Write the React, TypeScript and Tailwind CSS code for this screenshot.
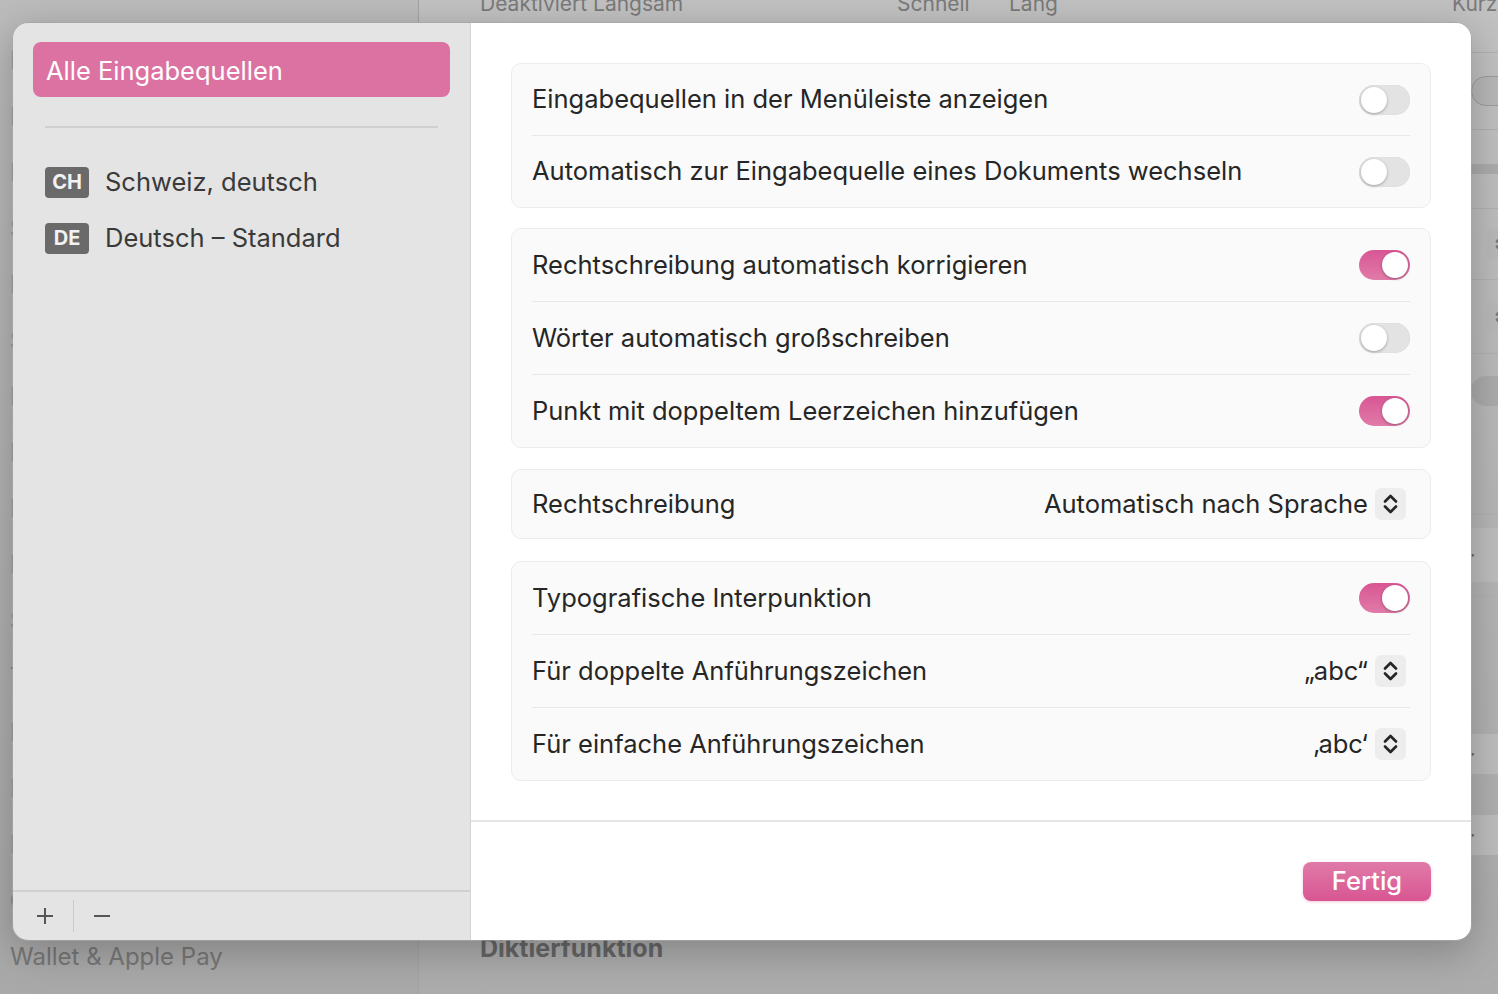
import React from "react";

const leftItems = [
  "Darstellung",
  "Bedienungshilfen",
  "Kontrollzentrum",
  "Siri & Spotlight",
  "Datenschutz",
  "Schreibtisch & Dock",
  "Displays",
  "Hintergrundbild",
  "Bildschirmschoner",
  "Batterie",
  "Sperrbildschirm",
  "Touch ID & Passwort",
  "Benutzer:innen",
  "Passwörter",
  "Internetaccounts",
  "Game Center",
];

function ChevronGlyph({ color }: { color: string }) {
  return (
    <svg width="15" height="24" viewBox="0 0 15 24" fill="none">
      <path d="M2 9.5 L7.5 4 L13 9.5" stroke={color} strokeWidth="2.7" strokeLinecap="round" strokeLinejoin="round" />
      <path d="M2 14.5 L7.5 20 L13 14.5" stroke={color} strokeWidth="2.7" strokeLinecap="round" strokeLinejoin="round" />
    </svg>
  );
}

function Chevrons() {
  return (
    <div className="flex h-[32px] w-[31px] items-center justify-center rounded-[6px] bg-[#ededed]">
      <ChevronGlyph color="#262626" />
    </div>
  );
}

function Toggle({ on }: { on?: boolean }) {
  return (
    <div
      className={
        on
          ? "flex h-[30px] w-[51px] items-center justify-end rounded-full bg-gradient-to-b from-[#d85594] to-[#e07ba8] px-[2px]"
          : "flex h-[30px] w-[51px] items-center justify-start rounded-full bg-[#e3e3e3] px-[2px] shadow-[inset_0_0_1px_rgba(0,0,0,0.15)]"
      }
    >
      <div className="h-[26px] w-[26px] rounded-full bg-white shadow-[0_1px_3px_rgba(0,0,0,0.3)]" />
    </div>
  );
}

function Row({ label, h = "h-[72px]", children }: { label: string; h?: string; children: React.ReactNode }) {
  return (
    <div className={`flex items-center justify-between px-[20px] ${h}`}>
      <span className="text-[25.5px] text-[#262626]">{label}</span>
      {children}
    </div>
  );
}

function PopupRow({ label, value, h }: { label: string; value: string; h: string }) {
  return (
    <div className={`flex items-center justify-between pl-[20px] pr-[24px] ${h}`}>
      <span className="text-[25.5px] text-[#262626]">{label}</span>
      <div className="flex items-center gap-[7px]">
        <span className="text-[25.5px] text-[#262626]">{value}</span>
        <Chevrons />
      </div>
    </div>
  );
}

function Divider() {
  return <div className="mx-[20px] h-px bg-[#e8e8e8]" />;
}

function Group({ className = "", children }: { className?: string; children: React.ReactNode }) {
  return <div className={`rounded-[10px] border border-[#ececec] bg-[#fafafa] ${className}`}>{children}</div>;
}

function BgRow({ h, children }: { h: string; children?: React.ReactNode }) {
  return <div className={`flex items-center justify-end border-b border-[#b1b1b1] ${h}`}>{children}</div>;
}

function BgButton({ h }: { h: string }) {
  return (
    <div className={`flex w-[70px] items-center rounded-[12px] bg-[#bebebe] pl-[12px] text-[20px] leading-none text-[#666] ${h}`}>
      ··
    </div>
  );
}

export default function App() {
  return (
    <div className="relative h-[994px] w-[1498px] overflow-hidden font-['Inter',sans-serif]">
      {/* dimmed settings window behind */}
      <div className="flex h-full w-full">
        <div className="flex w-[419px] flex-col justify-end border-r border-[#a3a3a3] bg-gradient-to-b from-[#bcbcbc] to-[#a9a9a9] pb-[9px] pl-[10px]">
          {leftItems.map((t) => (
            <div key={t} className="flex h-[56px] shrink-0 items-center whitespace-nowrap text-[24px] text-[#777]">
              {t}
            </div>
          ))}
          <div className="flex h-[56px] shrink-0 items-center whitespace-nowrap text-[24px] text-[#777]">Wallet &amp; Apple Pay</div>
        </div>
        <div className="flex flex-1 flex-col bg-gradient-to-b from-[#c2c2c2] to-[#acacac]">
          <div className="flex h-[53px] shrink-0 items-start whitespace-nowrap border-b border-[#b1b1b1] pl-[61px] text-[21px] text-[#7a7a7a]">
            <span className="-mt-[12px] w-[417px]">Deaktiviert Langsam</span>
            <span className="-mt-[12px] w-[112px]">Schnell</span>
            <span className="-mt-[12px] w-[443px]">Lang</span>
            <span className="-mt-[12px]">Kurz</span>
          </div>
          <div className="mr-[-24px] flex flex-col">
            <BgRow h="h-[77px]">
              <div className="h-[30px] w-[51px] rounded-full border border-[#9c9c9c] bg-[#b8b8b8]" />
            </BgRow>
            <BgRow h="h-[79px]">
              <div className="h-[10px] w-[60px] rounded-full bg-[#acacac]" />
            </BgRow>
            <BgRow h="h-[71px]">
              <div className="mr-[4px] flex h-[32px] w-[31px] items-center justify-center rounded-[6px] bg-[#b9b9b9]">
                <ChevronGlyph color="#7a7a7a" />
              </div>
            </BgRow>
            <BgRow h="h-[74px]">
              <div className="mr-[4px] flex h-[32px] w-[31px] items-center justify-center rounded-[6px] bg-[#b9b9b9]">
                <ChevronGlyph color="#7a7a7a" />
              </div>
            </BgRow>
            <BgRow h="h-[161px]">
              <div className="mb-[86px] h-[30px] w-[51px] rounded-full bg-[#acacac]" />
            </BgRow>
            <BgRow h="h-[81px]">
              <BgButton h="h-[54px]" />
            </BgRow>
            <BgRow h="h-[115px]" />
            <BgRow h="h-[87px]">
              <BgButton h="h-[40px]" />
            </BgRow>
            <BgRow h="h-[74px]">
              <BgButton h="h-[40px]" />
            </BgRow>
          </div>
          <div className="flex flex-1 flex-col pl-[61px]">
            <div className="mt-[58px] whitespace-nowrap text-[25px] font-bold text-[#666]">Diktierfunktion</div>
            <div className="mt-[14px] h-[40px] rounded-t-[12px] border border-[#b0b0b0]" />
          </div>
        </div>
      </div>

      {/* input sources sheet */}
      <div className="absolute left-[12px] top-[22px] flex h-[919px] w-[1460px] overflow-hidden rounded-[16px] border border-[#9a9a9a]/60 shadow-[0_10px_40px_rgba(0,0,0,0.25)]">
        <div className="flex w-[458px] flex-col border-r border-[#d4d4d4] bg-[#e4e4e4]">
          <div className="px-[20px] pt-[19px]">
            <div className="flex h-[55px] items-center rounded-[8px] bg-[#dc72a2] pl-[13px] pt-[3px] text-[25.5px] text-white">
              Alle Eingabequellen
            </div>
          </div>
          <div className="mx-[32px] mt-[29px] h-[2px] bg-[#d0d0d0]" />
          <div className="mt-[26px] flex flex-col px-[32px]">
            <div className="flex h-[56px] items-center gap-[16px]">
              <div className="flex h-[31px] w-[44px] items-center justify-center rounded-[4px] bg-[#6a6a6a] text-[20px] font-bold text-[#f2f2f2]">
                CH
              </div>
              <span className="text-[25.5px] text-[#3a3a3a]">Schweiz, deutsch</span>
            </div>
            <div className="flex h-[56px] items-center gap-[16px]">
              <div className="flex h-[31px] w-[44px] items-center justify-center rounded-[4px] bg-[#6a6a6a] text-[20px] font-bold text-[#f2f2f2]">
                DE
              </div>
              <span className="text-[25.5px] text-[#3a3a3a]">Deutsch – Standard</span>
            </div>
          </div>
          <div className="flex-1" />
          <div className="flex h-[50px] items-center border-t-2 border-[#d0d0d0] pl-[22px]">
            <svg width="20" height="20" viewBox="0 0 20 20">
              <path d="M10 2 V18 M2 10 H18" stroke="#555" strokeWidth="2" />
            </svg>
            <div className="ml-[18px] h-[32px] w-px bg-[#c9c9c9]" />
            <svg className="ml-[18px]" width="20" height="20" viewBox="0 0 20 20">
              <path d="M2 10 H18" stroke="#555" strokeWidth="2" />
            </svg>
          </div>
        </div>

        <div className="flex flex-1 flex-col bg-white">
          <div className="flex flex-1 flex-col px-[40px] pt-[40px]">
            <Group>
              <Row label="Eingabequellen in der Menüleiste anzeigen" h="h-[71px]">
                <Toggle />
              </Row>
              <Divider />
              <Row label="Automatisch zur Eingabequelle eines Dokuments wechseln" h="h-[71px]">
                <Toggle />
              </Row>
            </Group>
            <Group className="mt-[20px]">
              <Row label="Rechtschreibung automatisch korrigieren">
                <Toggle on />
              </Row>
              <Divider />
              <Row label="Wörter automatisch großschreiben">
                <Toggle />
              </Row>
              <Divider />
              <Row label="Punkt mit doppeltem Leerzeichen hinzufügen">
                <Toggle on />
              </Row>
            </Group>
            <Group className="mt-[21px]">
              <PopupRow label="Rechtschreibung" value="Automatisch nach Sprache" h="h-[68px]" />
            </Group>
            <Group className="mt-[22px]">
              <Row label="Typografische Interpunktion">
                <Toggle on />
              </Row>
              <Divider />
              <PopupRow label="Für doppelte Anführungszeichen" value="„abc“" h="h-[72px]" />
              <Divider />
              <PopupRow label="Für einfache Anführungszeichen" value="‚abc‘" h="h-[72px]" />
            </Group>
          </div>
          <div className="flex h-[120px] items-center justify-end border-t-2 border-[#e6e6e6] pr-[40px]">
            <button className="flex h-[39px] w-[128px] items-center justify-center rounded-[8px] bg-gradient-to-b from-[#e07aa8] to-[#d85592] text-[25.5px] font-medium text-white shadow-[0_1px_3px_rgba(216,85,146,0.35)]">
              Fertig
            </button>
          </div>
        </div>
      </div>
    </div>
  );
}
